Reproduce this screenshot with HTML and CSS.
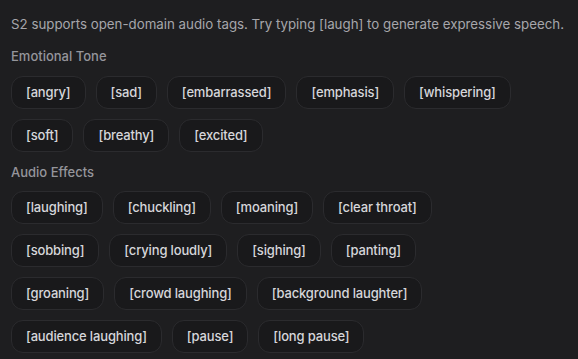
FILE: index.html
```html
<!DOCTYPE html>
<html>
<head>
<meta charset="utf-8">
<link rel="stylesheet" href="styles.css">
</head>
<body>
<div class="panel">
  <p class="intro">S2 supports open-domain audio tags. Try typing [laugh] to generate expressive speech.</p>
  <section class="group first">
    <h3 class="heading">Emotional Tone</h3>
    <div class="tags">
      <span class="tag">[angry]</span>
      <span class="tag">[sad]</span>
      <span class="tag">[embarrassed]</span>
      <span class="tag">[emphasis]</span>
      <span class="tag">[whispering]</span>
      <span class="tag">[soft]</span>
      <span class="tag">[breathy]</span>
      <span class="tag">[excited]</span>
    </div>
  </section>
  <section class="group">
    <h3 class="heading">Audio Effects</h3>
    <div class="tags">
      <span class="tag">[laughing]</span>
      <span class="tag">[chuckling]</span>
      <span class="tag">[moaning]</span>
      <span class="tag">[clear throat]</span>
      <span class="tag">[sobbing]</span>
      <span class="tag">[crying loudly]</span>
      <span class="tag">[sighing]</span>
      <span class="tag">[panting]</span>
      <span class="tag">[groaning]</span>
      <span class="tag">[crowd laughing]</span>
      <span class="tag">[background laughter]</span>
      <span class="tag">[audience laughing]</span>
      <span class="tag">[pause]</span>
      <span class="tag">[long pause]</span>
    </div>
  </section>
</div>
</body>
</html>
```
FILE: styles.css
```css
html, body {
  margin: 0;
  background: #1e1e20;
}
body {
  font-family: Inter, "Noto Sans", sans-serif;
  width: 578px;
  height: 359px;
  overflow: hidden;
}
.panel {
  padding: 14px 11px 0 11px;
}
.intro {
  margin: 0;
  font-size: 13.3px;
  line-height: 20px;
  color: #a6a6ab;
  white-space: nowrap;
}
.group {
  margin-top: 11px;
}
.group.first {
  margin-top: 13px;
}
.heading {
  margin: 0 0 10px 0;
  font-size: 13px;
  line-height: 18px;
  font-weight: 500;
  color: #95959b;
}
.group.first .heading {
  margin-bottom: 11px;
}
.tags {
  display: flex;
  flex-wrap: wrap;
  gap: 10px;
  width: 502px;
}
.tag {
  box-sizing: border-box;
  height: 33px;
  line-height: 31px;
  padding: 0 14px;
  border: 1px solid #2b2b2e;
  border-radius: 12px;
  background: #19191b;
  color: #d6d6da;
  font-size: 13px;
  font-weight: 500;
  letter-spacing: -0.15px;
  white-space: nowrap;
}
```
